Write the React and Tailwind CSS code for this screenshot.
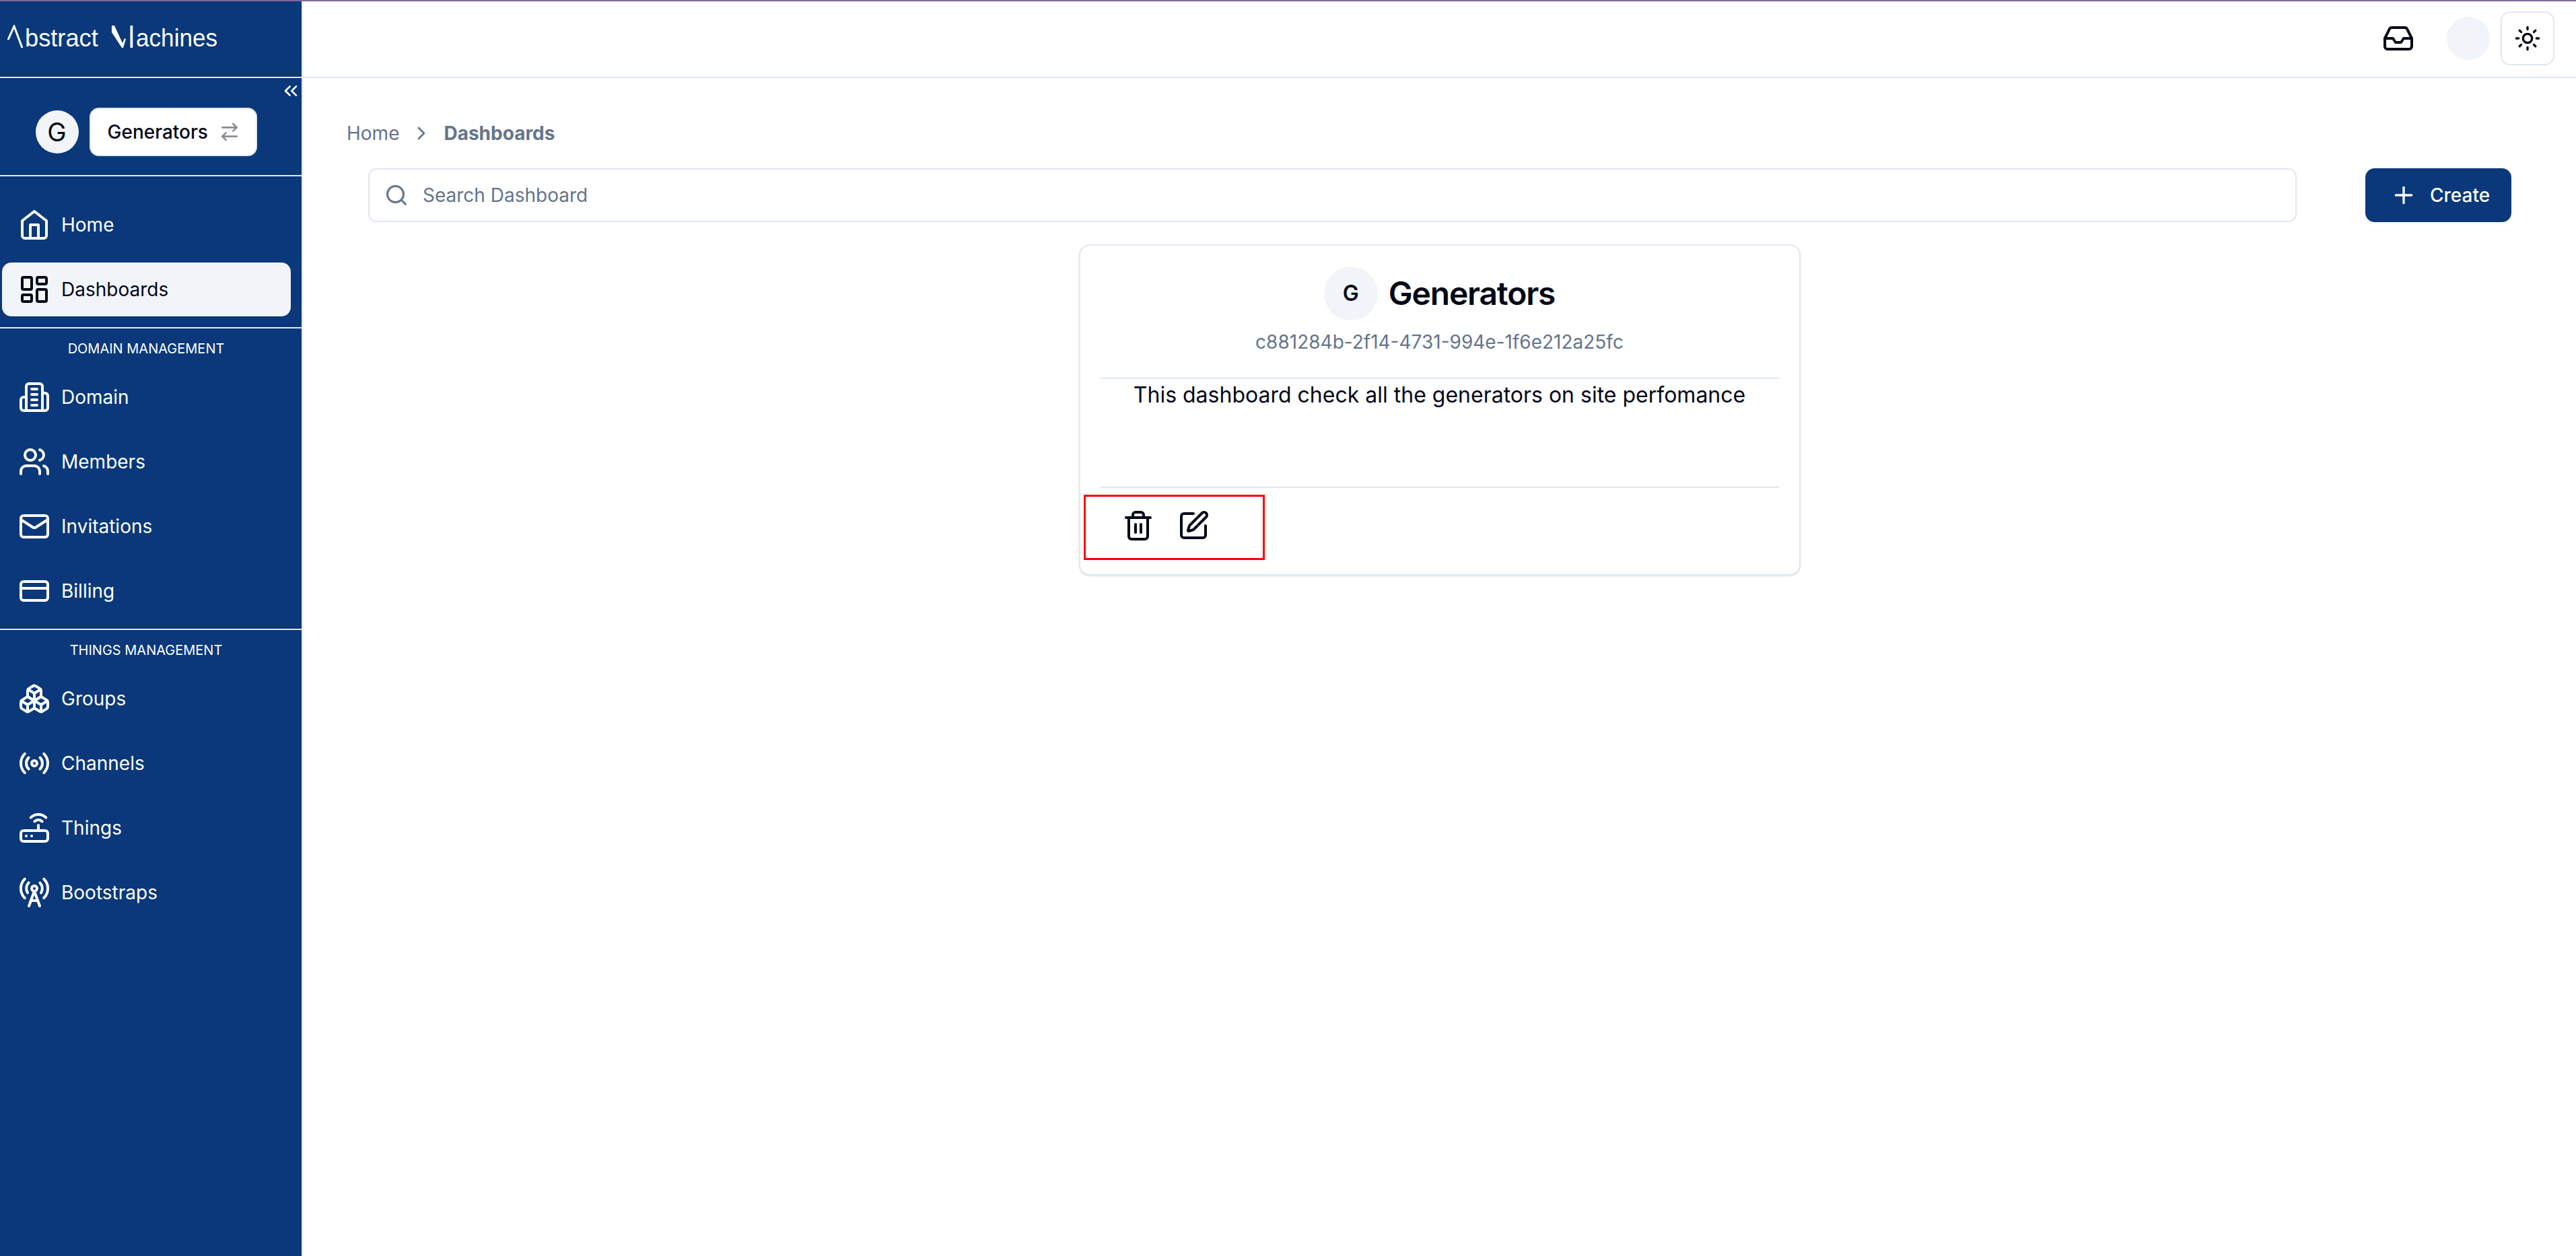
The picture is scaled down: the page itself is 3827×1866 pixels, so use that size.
import { ArrowRightLeft, Boxes, ChevronRight, ChevronsLeft, CreditCard, Inbox, LayoutDashboard, Mail, Plus, Radio, RadioTower, Router, Search, SquarePen, Sun, Trash2, Users } from 'lucide-react'

const HomeIcon = () => (
  <svg width="48" height="48" viewBox="0 0 24 24" fill="none" stroke="currentColor" strokeWidth="2" strokeLinecap="round" strokeLinejoin="round">
    <path d="m3 9 9-7 9 7v11a2 2 0 0 1-2 2H5a2 2 0 0 1-2-2z" />
    <path d="M9 22V12h6v10" />
  </svg>
)

const DomainIcon = () => (
  <svg width="48" height="48" viewBox="0 0 24 24" fill="none" stroke="currentColor" strokeWidth="2" strokeLinecap="round" strokeLinejoin="round">
    <path d="M6 22V4a2 2 0 0 1 2-2h8a2 2 0 0 1 2 2v18Z" />
    <path d="M6 12H4a2 2 0 0 0-2 2v6a2 2 0 0 0 2 2h2" />
    <path d="M18 9h2a2 2 0 0 1 2 2v9a2 2 0 0 1-2 2h-2" />
    <path d="M10 6h4M10 10h4M10 14h4M10 18h4" />
  </svg>
)

function Logo() {
  return (
    <div className="flex h-[114px] items-center border-b-2 border-[#e2e8f0] pb-[3px] font-['Liberation_Sans',sans-serif] text-[37px] leading-none font-normal text-white">
      <svg width="37" height="40" viewBox="0 0 37 40" className="shrink-0" fill="none" stroke="currentColor" strokeWidth="3">
        <path d="M12 22 21 2l12 32" />
      </svg>
      <span className="inline-block w-[110px] origin-left scale-x-[0.98]">bstract</span>
      <svg width="55" height="40" viewBox="0 0 55 40" className="shrink-0" fill="currentColor">
        <path d="M19 1h4l12 26 3-7 2 1-4 13h-2L19 11zM46.500 1h3.800v33h-3.800z" />
      </svg>
      <span className="inline-block w-[125px] origin-left scale-x-[0.95]">achines</span>
    </div>
  )
}

function NavRow({ icon, label, active }) {
  return (
    <div className={`ml-[3px] mr-[16px] flex h-20 items-center gap-4 rounded-[14px] pl-6 text-[28px] leading-10 ${active ? 'bg-[#f1f5f9] text-[#020817]' : 'text-white'}`}>
      {icon}
      <span>{label}</span>
    </div>
  )
}

function Sidebar() {
  return (
    <aside className="w-[450px] shrink-0 border-r-2 border-[#e2e8f0] bg-[#0a387a]">
      <Logo />
      <div className="relative flex h-[146px] items-center justify-center gap-4 border-b-2 border-[#e2e8f0] pr-[14px] pt-4">
        <ChevronsLeft size={32} strokeWidth={2} className="absolute right-0 top-[3px] text-white" />
        <div className="flex h-16 w-16 items-center justify-center rounded-full bg-[#f1f5f9] text-[38px] text-[#020817]">G</div>
        <div className="flex h-[72px] w-[249px] items-center gap-4 rounded-[14px] border-2 border-[#e2e8f0] bg-white pl-[25px] text-[28px] font-medium text-[#020817]">
          Generators
          <ArrowRightLeft size={32} strokeWidth={2} className="text-[#8b8d94]" />
        </div>
      </div>
      <nav className="flex flex-col gap-4 border-b-2 border-[#e2e8f0] pb-4 pt-8">
        <NavRow icon={<HomeIcon />} label="Home" />
        <NavRow icon={<LayoutDashboard size={48} strokeWidth={2} />} label="Dashboards" active />
      </nav>
      <div className="border-b-2 border-[#e2e8f0] pb-4">
        <p className="mb-[22px] mt-5 pr-[14px] text-center text-[20px] leading-5 text-white">DOMAIN MANAGEMENT</p>
        <div className="flex flex-col gap-4">
          <NavRow icon={<DomainIcon />} label="Domain" />
          <NavRow icon={<Users size={48} strokeWidth={2} />} label="Members" />
          <NavRow icon={<Mail size={48} strokeWidth={2} />} label="Invitations" />
          <NavRow icon={<CreditCard size={48} strokeWidth={2} />} label="Billing" />
        </div>
      </div>
      <p className="mb-[22px] mt-5 pr-[14px] text-center text-[20px] leading-5 text-white">THINGS MANAGEMENT</p>
      <div className="flex flex-col gap-4">
        <NavRow icon={<Boxes size={48} strokeWidth={2} />} label="Groups" />
        <NavRow icon={<Radio size={48} strokeWidth={2} />} label="Channels" />
        <NavRow icon={<Router size={48} strokeWidth={2} />} label="Things" />
        <NavRow icon={<RadioTower size={48} strokeWidth={2} />} label="Bootstraps" />
      </div>
    </aside>
  )
}

function DashboardCard() {
  return (
    <div className="relative mx-auto mt-[33px] w-[1072px] rounded-[16px] border-2 border-[#e2e8f0] bg-white px-[30px] pb-[48px] pt-[31px] text-[#020817] shadow-sm">
      <div className="flex flex-col items-center border-b-2 border-[#e2e8f0] pb-[33px]">
        <div className="flex h-20 items-center gap-4">
          <div className="flex h-20 w-20 items-center justify-center rounded-full bg-[#f1f5f9] text-[32px] font-semibold">G</div>
          <h2 className="text-[48px] font-semibold tracking-tight">Generators</h2>
        </div>
        <p className="mt-3 text-[28px] leading-10 text-[#64748b]">c881284b-2f14-4731-994e-1f6e212a25fc</p>
      </div>
      <p className="h-[160px] pt-1 text-center text-[32px] leading-10">This dashboard check all the generators on site perfomance</p>
      <div className="flex gap-[34px] border-t-2 border-[#e2e8f0] pl-8 pt-8">
        <Trash2 size={48} strokeWidth={2} />
        <SquarePen size={48} strokeWidth={2} />
      </div>
      <div className="absolute left-[5px] top-[370px] h-[97px] w-[269px] border-[3px] border-[#ff0000]"></div>
    </div>
  )
}

export default function App() {
  return (
    <div className="flex h-[1866px] flex-col overflow-hidden bg-white font-['Inter',sans-serif]">
      <div className="h-[2px] bg-[#80689a]"></div>
      <div className="flex flex-1">
        <Sidebar />
        <main className="min-w-0 flex-1">
          <header className="flex h-[114px] items-center justify-end border-b-2 border-[#e2e8f0] pb-[2px] pr-[32px]">
            <Inbox size={48} strokeWidth={2} className="text-[#020817]" />
            <div className="ml-[48px] h-16 w-16 rounded-full bg-[#f1f5f9]"></div>
            <div className="ml-4 flex h-20 w-20 items-center justify-center rounded-[14px] border-2 border-[#e2e8f0]">
              <Sun size={40} strokeWidth={2} className="text-[#020817]" />
            </div>
          </header>
          <div className="flex h-[134px] items-center gap-[17px] pl-[65px] pt-[30px] text-[28px] text-[#64748b]">
            <span>Home</span>
            <ChevronRight size={32} strokeWidth={2} />
            <span className="font-bold">Dashboards</span>
          </div>
          <div className="flex gap-[102px] pl-[97px] pr-[96px]">
            <div className="flex h-20 flex-1 items-center gap-[21px] rounded-[12px] border-2 border-[#e2e8f0] pl-[22px] text-[28px] text-[#64748b]">
              <Search size={36} strokeWidth={2} />
              <span>Search Dashboard</span>
            </div>
            <button className="flex h-20 w-[217px] items-center gap-[19px] rounded-[14px] bg-[#0a387a] pl-[37px] text-[28px] font-medium text-white">
              <Plus size={40} strokeWidth={2} />
              Create
            </button>
          </div>
          <DashboardCard />
        </main>
      </div>
    </div>
  )
}
